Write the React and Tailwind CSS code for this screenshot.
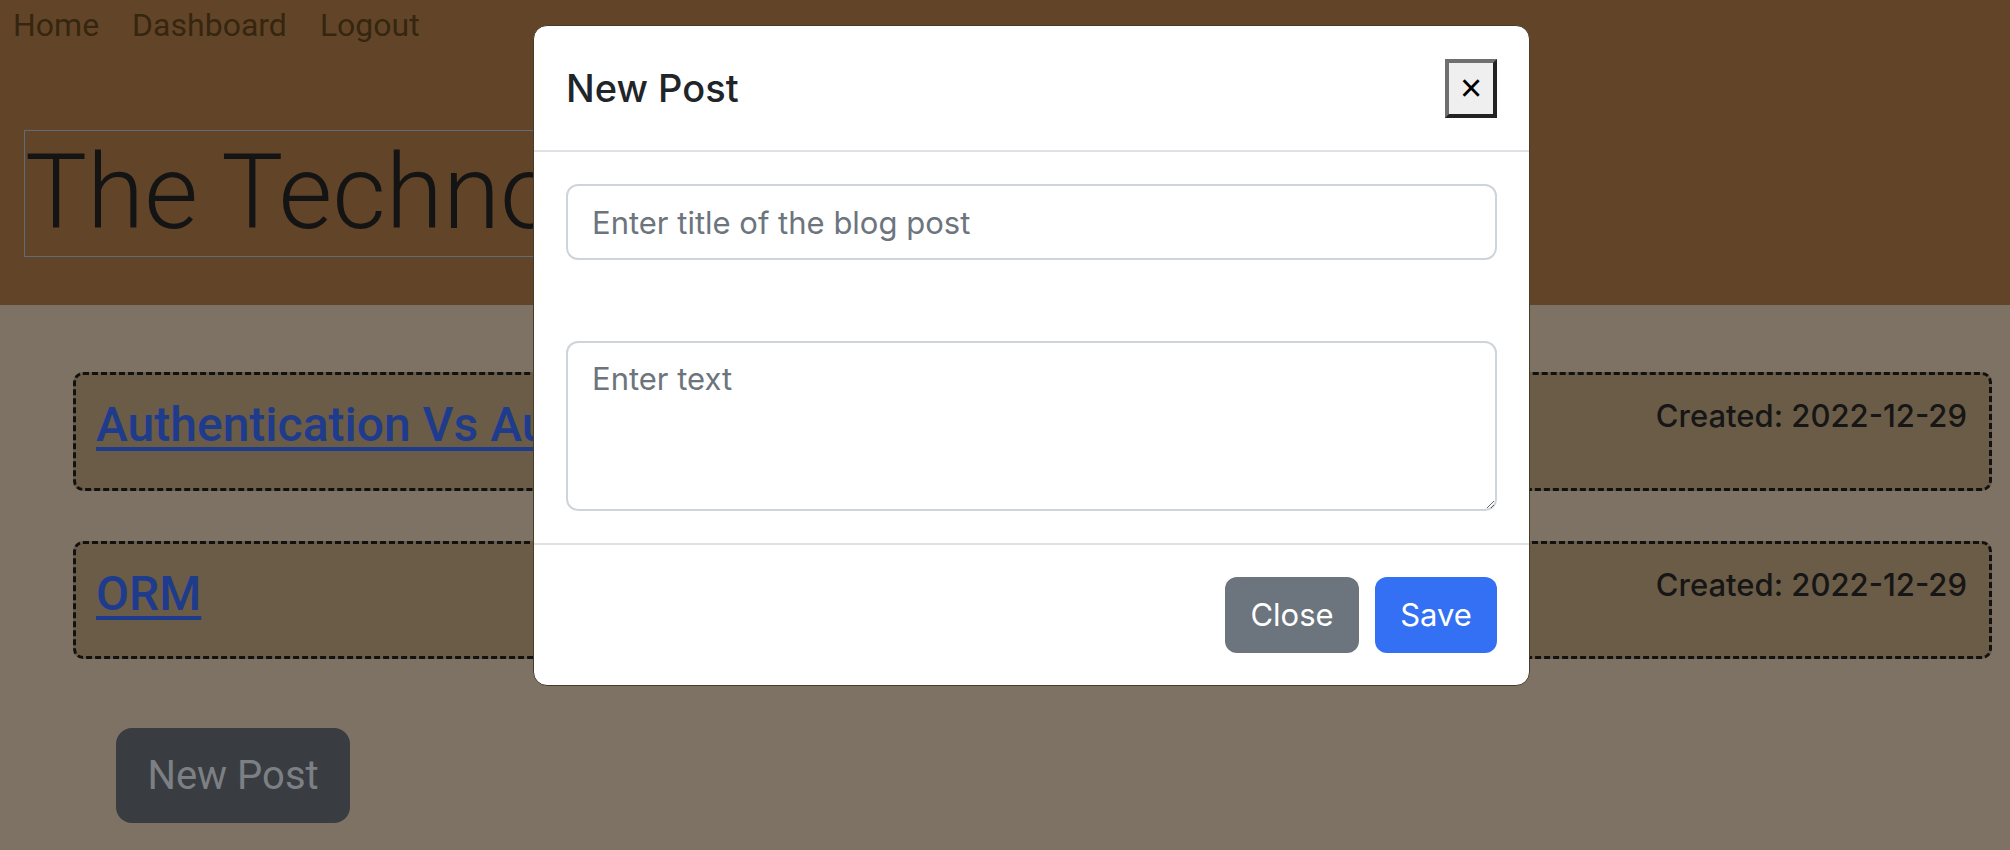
import React from "react";

function PostCard({ title }) {
  return (
    <div className="flex items-start justify-between rounded-[10px] border-[3px] border-dashed border-[#111111] bg-[#6b5c47] pl-[20px] pr-[22px] pt-[17px] pb-[34px]">
      <a
        href="#"
        className="mt-[4px] text-[48px] font-medium leading-[1.2] text-[#1f3b8c] underline decoration-[4px] underline-offset-[6px] font-['Roboto',sans-serif]"
      >
        {title}
      </a>
      <span className="text-[31px] font-medium leading-[48px] text-[#161616] font-['Inter',sans-serif]">
        Created: 2022-12-29
      </span>
    </div>
  );
}

export default function App() {
  return (
    <div className="relative h-[850px] w-[2010px] overflow-hidden bg-[#7e7264] font-['Roboto',sans-serif]">
      <header className="h-[305px] bg-[#624529] pl-[13px] pt-[1px]">
        <nav className="flex gap-[33px] text-[32px] leading-[48px] text-[#36260f]">
          <a href="#">Home</a>
          <a href="#">Dashboard</a>
          <a href="#">Logout</a>
        </nav>
        <div className="ml-[11px] mt-[81px] inline-block border border-[#5e6b78]">
          <h1 className="text-[104px] font-light leading-[1.2] text-[#141414] whitespace-nowrap">
            The Technology Blog
          </h1>
        </div>
      </header>

      <main className="pl-[73px] pr-[18px] pt-[67px]">
        <div className="flex flex-col gap-[50px]">
          <PostCard title="Authentication Vs Authorization" />
          <PostCard title="ORM" />
        </div>
        <button className="ml-[43px] mt-[69px] h-[95px] w-[234px] rounded-[16px] bg-[#393c40] text-[40px] text-[#7c8084]">
          New Post
        </button>
      </main>

      {/* Modal */}
      <div className="absolute left-[533px] top-[25px] w-[997px] rounded-[14px] border border-[#4a3a28] bg-white font-['Inter',sans-serif]">
        <div className="flex items-center justify-between border-b-2 border-[#dee2e6] px-[32px] py-[32px]">
          <h5 className="text-[38px] font-medium leading-[60px] text-[#212529]">New Post</h5>
          <button className="flex h-[59px] w-[52px] items-center justify-center border-[4px] border-t-[#6f6f6f] border-l-[#6f6f6f] border-b-[#222222] border-r-[#222222] bg-[#efefef] text-[38px] leading-none text-black font-['Liberation_Sans',sans-serif]">
            ×
          </button>
        </div>
        <div className="px-[32px] py-[32px]">
          <input
            type="text"
            placeholder="Enter title of the blog post"
            className="block h-[76px] w-full rounded-[12px] border-2 border-[#ced4da] px-[24px] text-[31px] leading-[48px] text-[#212529] placeholder:text-[#6c757d] outline-none"
          />
          <textarea
            placeholder="Enter text"
            className="mt-[81px] block h-[170px] w-full rounded-[12px] border-2 border-[#ced4da] px-[24px] py-[12px] text-[31px] leading-[48px] text-[#212529] placeholder:text-[#6c757d] outline-none"
          />
        </div>
        <div className="flex justify-end gap-[16px] border-t-2 border-[#dee2e6] px-[32px] py-[32px]">
          <button className="h-[76px] w-[134px] rounded-[12px] bg-[#6c757d] text-[31px] text-white">
            Close
          </button>
          <button className="h-[76px] w-[122px] rounded-[12px] bg-[#3470f4] text-[31px] text-white">
            Save
          </button>
        </div>
      </div>
    </div>
  );
}
